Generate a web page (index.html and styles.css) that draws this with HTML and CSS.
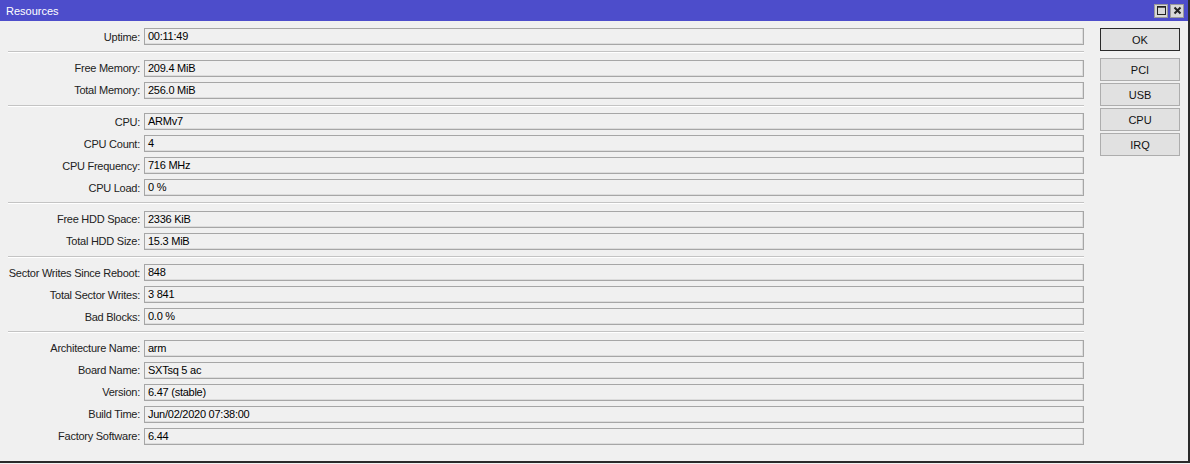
FILE: index.html
```html
<!DOCTYPE html>
<html>
<head>
<meta charset="utf-8">
<title>Resources</title>
<link rel="stylesheet" href="styles.css">
</head>
<body>
<div class="window">
  <div class="titlebar">
    <span class="title">Resources</span>
    <div class="tb-buttons">
      <span class="tb-btn"><svg width="11" height="11" viewBox="0 0 11 11"><rect x="1.5" y="1.5" width="8" height="8" fill="none" stroke="#222" stroke-width="1"/><line x1="1" y1="2" x2="10" y2="2" stroke="#222" stroke-width="1.4"/></svg></span>
      <span class="tb-btn"><svg width="11" height="11" viewBox="0 0 11 11"><path d="M2.5 2.5 L8.5 8.5 M8.5 2.5 L2.5 8.5" stroke="#222" stroke-width="2"/></svg></span>
    </div>
  </div>
  <div class="body">
    <div class="form">
      <div class="section">
        <div class="row"><label>Uptime:</label><div class="field">00:11:49</div></div>
      </div>
      <div class="sep"></div>
      <div class="section">
        <div class="row"><label>Free Memory:</label><div class="field">209.4 MiB</div></div>
        <div class="row"><label>Total Memory:</label><div class="field">256.0 MiB</div></div>
      </div>
      <div class="sep"></div>
      <div class="section">
        <div class="row"><label>CPU:</label><div class="field">ARMv7</div></div>
        <div class="row"><label>CPU Count:</label><div class="field">4</div></div>
        <div class="row"><label>CPU Frequency:</label><div class="field">716 MHz</div></div>
        <div class="row"><label>CPU Load:</label><div class="field">0 %</div></div>
      </div>
      <div class="sep"></div>
      <div class="section">
        <div class="row"><label>Free HDD Space:</label><div class="field">2336 KiB</div></div>
        <div class="row"><label>Total HDD Size:</label><div class="field">15.3 MiB</div></div>
      </div>
      <div class="sep"></div>
      <div class="section">
        <div class="row"><label>Sector Writes Since Reboot:</label><div class="field">848</div></div>
        <div class="row"><label>Total Sector Writes:</label><div class="field">3 841</div></div>
        <div class="row"><label>Bad Blocks:</label><div class="field">0.0 %</div></div>
      </div>
      <div class="sep"></div>
      <div class="section">
        <div class="row"><label>Architecture Name:</label><div class="field">arm</div></div>
        <div class="row"><label>Board Name:</label><div class="field">SXTsq 5 ac</div></div>
        <div class="row"><label>Version:</label><div class="field">6.47 (stable)</div></div>
        <div class="row"><label>Build Time:</label><div class="field">Jun/02/2020 07:38:00</div></div>
        <div class="row"><label>Factory Software:</label><div class="field">6.44</div></div>
      </div>
    </div>
    <div class="actions">
      <button class="btn default">OK</button>
      <div class="btn-group">
        <button class="btn">PCI</button>
        <button class="btn">USB</button>
        <button class="btn">CPU</button>
        <button class="btn">IRQ</button>
      </div>
    </div>
  </div>
</div>
</body>
</html>
```
FILE: styles.css
```css
html, body {
  margin: 0;
  padding: 0;
  background: #f0f0f0;
}
body {
  font-family: "Liberation Sans", Arial, sans-serif;
  font-size: 11px;
  letter-spacing: -0.25px;
  color: #1a1a1a;
}
.window {
  width: 1188px;
  height: 461px;
  background: #f0f0f0;
  border-right: 2px solid #2a2a2a;
  border-bottom: 2px solid #2a2a2a;
  display: flex;
  flex-direction: column;
}
.titlebar {
  height: 21px;
  background: #4d4dcb;
  display: flex;
  align-items: center;
  justify-content: space-between;
  padding: 0 4px 0 6px;
  flex-shrink: 0;
}
.title {
  color: #ffffff;
  font-size: 11px;
  letter-spacing: 0;
}
.tb-buttons {
  display: flex;
  gap: 2px;
  align-items: center;
}
.tb-btn {
  width: 14px;
  height: 14px;
  background: #d8d8d8;
  border: 1px solid #9a9a9a;
  box-sizing: border-box;
  display: flex;
  align-items: center;
  justify-content: center;
}
.body {
  display: flex;
  flex: 1;
  padding-top: 7px;
}
.form {
  width: 1084px;
  display: flex;
  flex-direction: column;
}
.section {
  display: flex;
  flex-direction: column;
  gap: 5px;
}
.row {
  display: flex;
  align-items: center;
  height: 17px;
}
.row label {
  width: 144px;
  text-align: right;
  padding-right: 4px;
  box-sizing: border-box;
  flex-shrink: 0;
  white-space: nowrap;
  color: #222;
}
.field {
  flex: 1;
  height: 17px;
  box-sizing: border-box;
  border: 1px solid #a6a6a6;
  box-shadow: inset -1px -1px 0 #dcdcdc;
  background: #f0f0f0;
  padding-left: 3px;
  line-height: 15px;
  color: #000;
}
.sep {
  margin: 6px 0 6.6px 8px;
  border-top: 1px solid #c4c4c4;
  border-bottom: 1px solid #ffffff;
  height: 0;
}
.actions {
  margin-left: 16px;
  width: 80px;
  display: flex;
  flex-direction: column;
}
.btn {
  width: 80px;
  height: 23px;
  background: #e1e1e1;
  border: 1px solid #adadad;
  font-family: "Liberation Sans", Arial, sans-serif;
  font-size: 11px;
  color: #111;
  padding: 0;
  box-sizing: border-box;
}
.btn.default {
  border: 1px solid #2a2a2a;
  box-shadow: inset 0 0 0 1px #e1e1e1;
}
.btn-group {
  margin-top: 7px;
  display: flex;
  flex-direction: column;
  gap: 2px;
}
```
